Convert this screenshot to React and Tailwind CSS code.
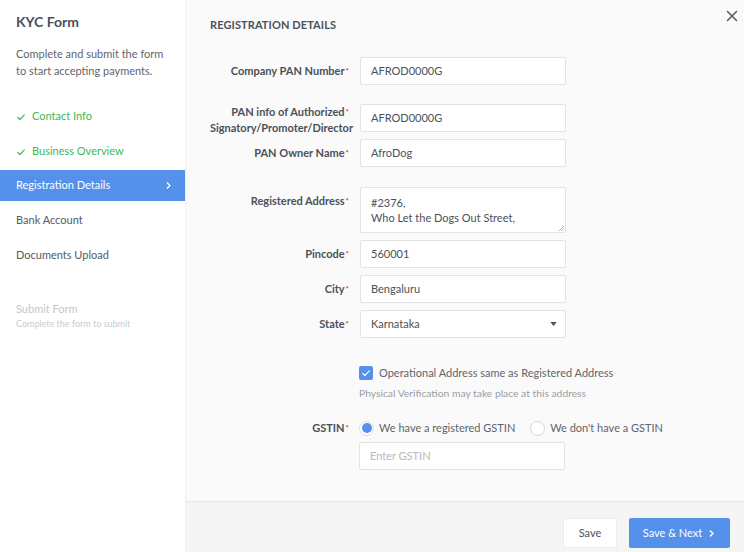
import React from 'react';

const font = { fontFamily: 'Lato, "Open Sans", sans-serif' };

const Check = ({ className }) => (
  <svg viewBox="0 0 12 12" className={className} fill="none" stroke="currentColor" strokeWidth="1.4" strokeLinecap="round" strokeLinejoin="round">
    <path d="M2 6.5l2.6 2.5L10 3.5" />
  </svg>
);

const Chevron = ({ className }) => (
  <svg viewBox="0 0 8 8" className={className} fill="none" stroke="currentColor" strokeWidth="1.3" strokeLinecap="round" strokeLinejoin="round">
    <path d="M3 1.8L5.3 4 3 6.2" />
  </svg>
);

const Star = () => <sup className="text-[#e0413a] text-[8px] ml-[1px] relative top-[-1px]">*</sup>;

const Label = ({ children, className = '', star = true }) => (
  <div className={`w-[150px] shrink-0 text-right text-[11px] leading-[16px] font-bold text-[#4b5159] pr-[11px] ${className}`}>
    {children}
    {star && <Star />}
  </div>
);

const Input = ({ value, placeholder }) => (
  <div className="w-[206px] h-[28px] bg-white border border-[#e3e3e3] rounded-[2px] px-[10px] flex items-center text-[11px] text-[#4b5159]">
    {value ? value : <span className="text-[#b6b9bd]">{placeholder}</span>}
  </div>
);

const Row = ({ label, labelClass, star, children, className = '' }) => (
  <div className={`flex items-start ${className}`}>
    <Label className={labelClass} star={star}>{label}</Label>
    {children}
  </div>
);

const SideItem = ({ done, active, children }) => {
  if (active)
    return (
      <div className="h-[31px] bg-[#5590ea] text-white flex items-center justify-between pl-[16px] pr-[12px] text-[11px]">
        <span>{children}</span>
        <Chevron className="w-[9px] h-[9px]" />
      </div>
    );
  return (
    <div className={`h-[35px] flex items-center pl-[16px] text-[11px] ${done ? 'text-[#3fb950]' : 'text-[#545a61]'}`}>
      {done && <Check className="w-[10px] h-[10px] mr-[6px]" />}
      <span>{children}</span>
    </div>
  );
};

export default function App() {
  return (
    <div style={font} className="w-[744px] h-[552px] flex bg-[#fafafa] overflow-hidden">
      <aside className="w-[186px] shrink-0 bg-white border-r border-[#f0f0f0] flex flex-col">
        <div className="pl-[16px] pt-[12px]">
          <h1 className="text-[14px] leading-[20px] font-bold text-[#4b5159]">KYC Form</h1>
          <p className="mt-[13px] text-[11px] leading-[17px] text-[#5f656c] pr-[14px]">
            Complete and submit the form to start accepting payments.
          </p>
        </div>
        <div className="mt-[20px] flex flex-col">
          <SideItem done>Contact Info</SideItem>
          <SideItem done>Business Overview</SideItem>
          <div className="h-[1px]" />
          <SideItem active>Registration Details</SideItem>
          <div className="h-[2px]" />
          <SideItem>Bank Account</SideItem>
          <SideItem>Documents Upload</SideItem>
        </div>
        <div className="pl-[16px] mt-[28px]">
          <div className="text-[11px] leading-[16px] text-[#c3c7cb]">Submit Form</div>
          <div className="text-[9px] leading-[12px] text-[#c9ccd0] mt-[1px]">Complete the form to submit</div>
        </div>
      </aside>

      <main className="flex-1 flex flex-col relative">
        <button className="absolute right-[6px] top-[10px] text-[#545a61]">
          <svg viewBox="0 0 12 12" className="w-[12px] h-[12px]" fill="none" stroke="currentColor" strokeWidth="1.5" strokeLinecap="round">
            <path d="M1.5 1.5l9 9M10.5 1.5l-9 9" />
          </svg>
        </button>
        <div className="flex-1 pl-[24px] pt-[18px]">
          <h2 className="text-[11px] leading-[14px] font-bold text-[#4b5159] tracking-[0.1px]">REGISTRATION DETAILS</h2>

          <Row label="Company PAN Number" labelClass="pt-[6px]" className="mt-[25px]">
            <Input value="AFROD0000G" />
          </Row>
          <Row
            label={<>PAN info of Authorized<Star /><br />Signatory/Promoter/Director<span className="inline-block w-[4px]" /></>}
            star={false}
            labelClass="pt-[0px]"
            className="mt-[19px] h-[28px]"
          >
            <Input value="AFROD0000G" />
          </Row>
          <Row label="PAN Owner Name" labelClass="pt-[6px]" className="mt-[7px]">
            <Input value="AfroDog" />
          </Row>
          <Row label="Registered Address" labelClass="pt-[6px]" className="mt-[20px]">
            <div className="w-[206px] h-[46px] bg-white border border-[#e3e3e3] rounded-[2px] px-[10px] pt-[7px] text-[11px] leading-[15px] text-[#4b5159] relative">
              <div>#2376,</div>
              <div>Who Let the Dogs Out Street,</div>
              <svg viewBox="0 0 6 6" className="absolute right-[1px] bottom-[1px] w-[6px] h-[6px]" stroke="#999" strokeWidth="0.8">
                <path d="M1 6L6 1M3.5 6L6 3.5" />
              </svg>
            </div>
          </Row>
          <Row label="Pincode" labelClass="pt-[6px]" className="mt-[7px]">
            <Input value="560001" />
          </Row>
          <Row label="City" labelClass="pt-[6px]" className="mt-[7px]">
            <Input value="Bengaluru" />
          </Row>
          <Row label="State" labelClass="pt-[6px]" className="mt-[7px]">
            <div className="w-[206px] h-[28px] bg-white border border-[#e3e3e3] rounded-[2px] pl-[10px] pr-[8px] flex items-center justify-between text-[11px] text-[#4b5159]">
              <span>Karnataka</span>
              <svg viewBox="0 0 8 5" className="w-[7px] h-[4px]" fill="#4b5159"><path d="M0 0h8L4 5z" /></svg>
            </div>
          </Row>

          <div className="ml-[149px] mt-[27px]">
            <div className="flex items-center">
              <div className="w-[14px] h-[14px] rounded-[2px] bg-[#5590ea] flex items-center justify-center text-white">
                <Check className="w-[10px] h-[10px]" />
              </div>
              <span className="ml-[6px] text-[11px] text-[#5f656c]">Operational Address same as Registered Address</span>
            </div>
            <div className="mt-[4px] text-[10.3px] text-[#9a9ea3]">Physical Verification may take place at this address</div>
          </div>

          <Row label="GSTIN" labelClass="pt-[0px]" className="mt-[19px] items-center">
            <div className="flex items-center -ml-px">
              <div className="w-[15px] h-[15px] rounded-full border border-[#dcdcdc] bg-white flex items-center justify-center">
                <div className="w-[10px] h-[10px] rounded-full bg-[#5590ea]" />
              </div>
              <span className="ml-[5px] text-[11px] text-[#5f656c]">We have a registered GSTIN</span>
              <div className="ml-[15px] w-[15px] h-[15px] rounded-full border border-[#d6d6d6] bg-white" />
              <span className="ml-[5px] text-[11px] text-[#5f656c]">We don't have a GSTIN</span>
            </div>
          </Row>
          <div className="ml-[149px] mt-[6px]">
            <Input placeholder="Enter GSTIN" />
          </div>
        </div>

        <footer className="h-[51px] shrink-0 border-t border-[#e6e6e6] bg-[#f5f5f5] flex items-start justify-end pr-[14px] pt-[16px] gap-[12px]">
          <button className="w-[54px] h-[30px] bg-white border border-[#ececec] rounded-[2px] text-[11px] text-[#4b5159]">Save</button>
          <button className="w-[101px] h-[30px] bg-[#5590ea] rounded-[2px] text-[11px] text-white flex items-center justify-center gap-[5px]">
            Save &amp; Next
            <Chevron className="w-[9px] h-[9px]" />
          </button>
        </footer>
      </main>
    </div>
  );
}
